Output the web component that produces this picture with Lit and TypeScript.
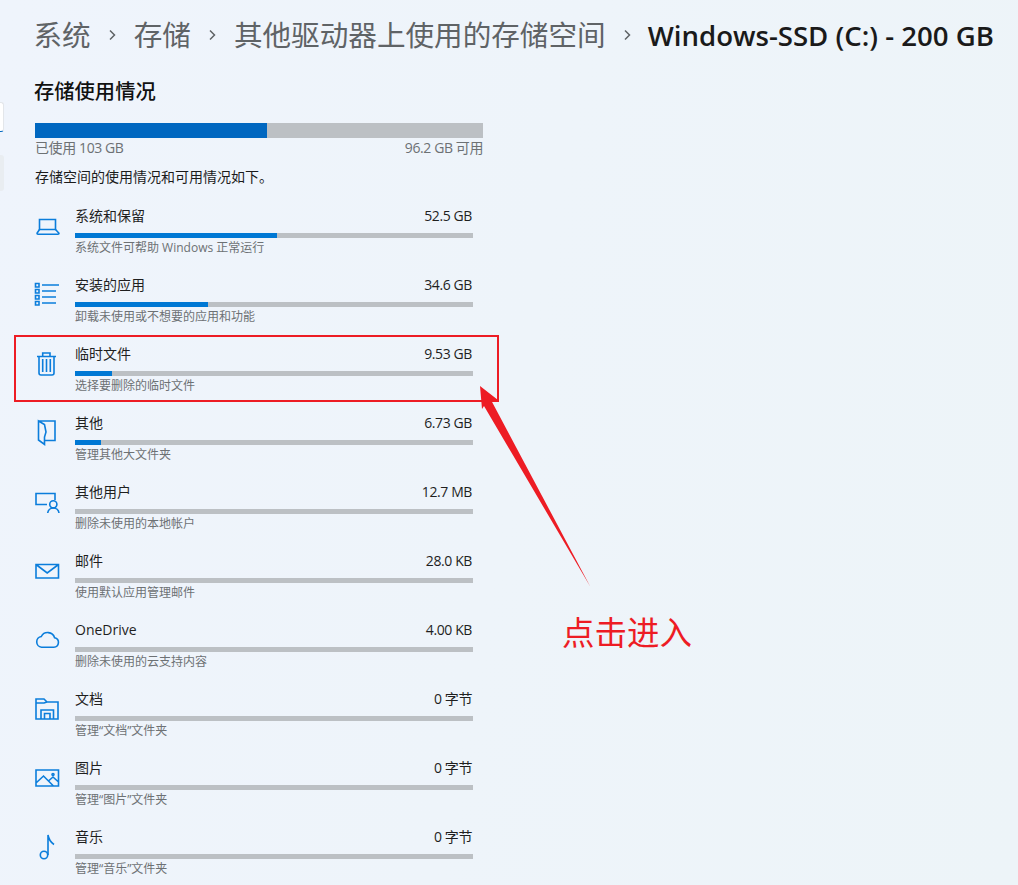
import { LitElement, html, css, svg } from "lit";
import { customElement } from "lit/decorators.js";

const ICONS: Record<string, unknown> = {
  laptop: svg`<path d="M7.5 19.5V9.5H23.5V19.5Z"/><path d="M7.5 19.5L5 23.2Q5 24.2 6 24.2H26Q27 24.2 27 23.2L23.5 19.5"/>`,
  list: svg`<path d="M3.5 4.5h3.5v3.5h-3.5zM3.5 10.5h3.5v3.5h-3.5zM3.5 16.5h3.5v3.5h-3.5zM3.5 22.5h3.5v3.5h-3.5zM10 6H27M10 12H24M10 18H24M10 24H24"/>`,
  trash: svg`<path d="M5 8.5H24M10.7 8V5H18V8M7 8.5V25a2 2 0 0 0 2 2H20a2 2 0 0 0 2-2V8.5M10.7 11V24M14.5 11V24M18.3 11V24"/>`,
  door: svg`<path d="M6.5 4L12.5 7.5L14 15L12.5 20V27.5L6.5 23ZM6.5 4H23V23.5H12.5"/>`,
  user: svg`<path d="M23 14V7.5H4V18.5H15"/><circle cx="21.3" cy="18.3" r="3.6"/><path d="M15.7 27a5.7 5.7 0 0 1 11.3 0"/>`,
  mail: svg`<path d="M4 9.5H26.5V23H4ZM4 9.5L15.2 18L26.5 9.5"/>`,
  cloud: svg`<path d="M9.5 23.2H21.8a4.8 4.8 0 0 0 .8-9.5A7.2 7.2 0 0 0 9.3 12.5A5.4 5.4 0 0 0 9.5 23.2Z"/>`,
  folder: svg`<path d="M4 26V6H12L15 9H26V26ZM4 10H12L15 9M9 26V17H21.5V26M12.5 26V20.5H18V26"/>`,
  picture: svg`<path d="M4 8H26.5V24H4ZM4 21L11.5 14L21.5 24M17 18.5L21 15L26.5 20"/><circle cx="21" cy="12.5" r="1"/>`,
  music: svg`<circle cx="12" cy="24" r="3.7"/><path d="M16 24V4Q17 10 22 13.5"/>`,
};

const ROWS = [
  ["laptop", "系统和保留", "52.5 GB", "系统文件可帮助 Windows 正常运行", 50.8],
  ["list", "安装的应用", "34.6 GB", "卸载未使用或不想要的应用和功能", 33.5],
  ["trash", "临时文件", "9.53 GB", "选择要删除的临时文件", 9.3],
  ["door", "其他", "6.73 GB", "管理其他大文件夹", 6.5],
  ["user", "其他用户", "12.7 MB", "删除未使用的本地帐户", 0],
  ["mail", "邮件", "28.0 KB", "使用默认应用管理邮件", 0],
  ["cloud", "OneDrive", "4.00 KB", "删除未使用的云支持内容", 0],
  ["folder", "文档", "0 字节", "管理“文档”文件夹", 0],
  ["picture", "图片", "0 字节", "管理“图片”文件夹", 0],
  ["music", "音乐", "0 字节", "管理“音乐”文件夹", 0],
] as const;

@customElement("app-root")
export class AppRoot extends LitElement {
  static styles = css`
    :host {
      display: block;
      position: relative;
      width: 1018px;
      height: 885px;
      overflow: hidden;
      background: linear-gradient(100deg, #eff4fc 0%, #eef4fa 50%, #edf4f8 100%);
      font-family: "Open Sans", "Noto Sans CJK SC", sans-serif;
      color: #1b1b1b;
    }
    .page { padding: 15px 0 0 35px; display: flex; flex-direction: column; }
    .crumbs { display: flex; align-items: center; height: 36px; margin-left: -1.5px; margin-bottom: 4px; font-size: 28.6px; color: #5f6366; white-space: nowrap; }
    .crumbs .cur { color: #1a1a1a; font-size: 27.6px; font-weight: 600; margin-top: 4px; margin-left: -1px; }
    .chev { width: 43px; flex: none; display: flex; justify-content: center; margin-top: 4px; }
    .chev svg { width: 8px; height: 12px; fill: none; stroke: #5f6366; stroke-width: 1.5; }
    h2 { margin: 22px 0 0 -1px; height: 28px; line-height: 28px; font-size: 20.3px; font-weight: 500; color: #111; }
    .usage { width: 448px; height: 15px; margin-top: 18px; background: #bcc0c4; }
    .usage div { width: 232px; height: 100%; background: #0067c0; }
    .labels { width: 448px; height: 20px; line-height: 20px; display: flex; justify-content: space-between; font-size: 14px; letter-spacing: -0.4px; color: #6d7174; }
    .desc { margin-top: 9px; height: 20px; line-height: 20px; font-size: 14px; color: #1b1b1b; }
    .rows { margin-top: 18px; display: flex; flex-direction: column; }
    .row { height: 69px; display: flex; }
    .icon { width: 40px; flex: none; margin-left: -3px; padding-top: 5px; margin-right: 3px; box-sizing: border-box; }
    .icon svg { display: block; width: 30px; height: 36px; fill: none; stroke: #0b7ddb; stroke-width: 1.6; }
    .body { width: 398px; }
    .top { height: 22px; line-height: 22px; display: flex; justify-content: space-between; font-size: 14px; color: #1f1f1f; padding-right: 1px; }
    .top span:last-child { letter-spacing: -0.4px; }
    .bar { height: 5px; margin-top: 6px; background: #bcc0c4; }
    .bar div { height: 100%; background: #0078d4; }
    .sub { height: 20px; line-height: 20px; font-size: 12px; color: #6d7174; white-space: nowrap; }
    .tab { position: absolute; left: 0; width: 4px; box-sizing: border-box; border-radius: 0 3px 3px 0; }
    .tab.on { top: 102px; height: 30px; background: #fff; border: 1px solid #e3e6ea; border-left: 0; border-bottom: 1px solid #0067c0; }
    .tab.off { top: 155px; height: 36px; background: #e9edf1; }
    .box { position: absolute; left: 14px; top: 335px; width: 485px; height: 67px; box-sizing: border-box; border: 2px solid #ed1c24; }
    .arrow { position: absolute; left: 0; top: 0; width: 1018px; height: 885px; pointer-events: none; }
    .arrow polygon { fill: #ed1c24; }
    .note { position: absolute; left: 562px; top: 610px; line-height: 46px; font-size: 32.5px; color: #ed1c24; }
  `;

  render() {
    return html`
      <div class="page">
        <div class="crumbs">
          <span>系统</span>${this.chev()}<span>存储</span>${this.chev()}
          <span>其他驱动器上使用的存储空间</span>${this.chev()}
          <span class="cur">Windows-SSD (C:) - 200 GB</span>
        </div>
        <h2>存储使用情况</h2>
        <div class="usage"><div></div></div>
        <div class="labels"><span>已使用 103 GB</span><span>96.2 GB 可用</span></div>
        <div class="desc">存储空间的使用情况和可用情况如下。</div>
        <div class="rows">
          ${ROWS.map(
            ([icon, title, size, sub, pct]) => html`
              <div class="row">
                <div class="icon"><svg viewBox="0 0 30 36">${ICONS[icon]}</svg></div>
                <div class="body">
                  <div class="top"><span>${title}</span><span>${size}</span></div>
                  <div class="bar"><div style="width:${pct}%"></div></div>
                  <div class="sub">${sub}</div>
                </div>
              </div>
            `
          )}
        </div>
      </div>
      <div class="tab on"></div>
      <div class="tab off"></div>
      <div class="box"></div>
      <svg class="arrow" viewBox="0 0 1018 885">
        <polygon points="480,386 498,400 491,400 590.5,587 484,406 482,409"></polygon>
      </svg>
      <div class="note">点击进入</div>
    `;
  }

  private chev() {
    return html`<span class="chev"><svg viewBox="0 0 8 12"><path d="M2 1.5L6.5 6L2 10.5"></path></svg></span>`;
  }
}
